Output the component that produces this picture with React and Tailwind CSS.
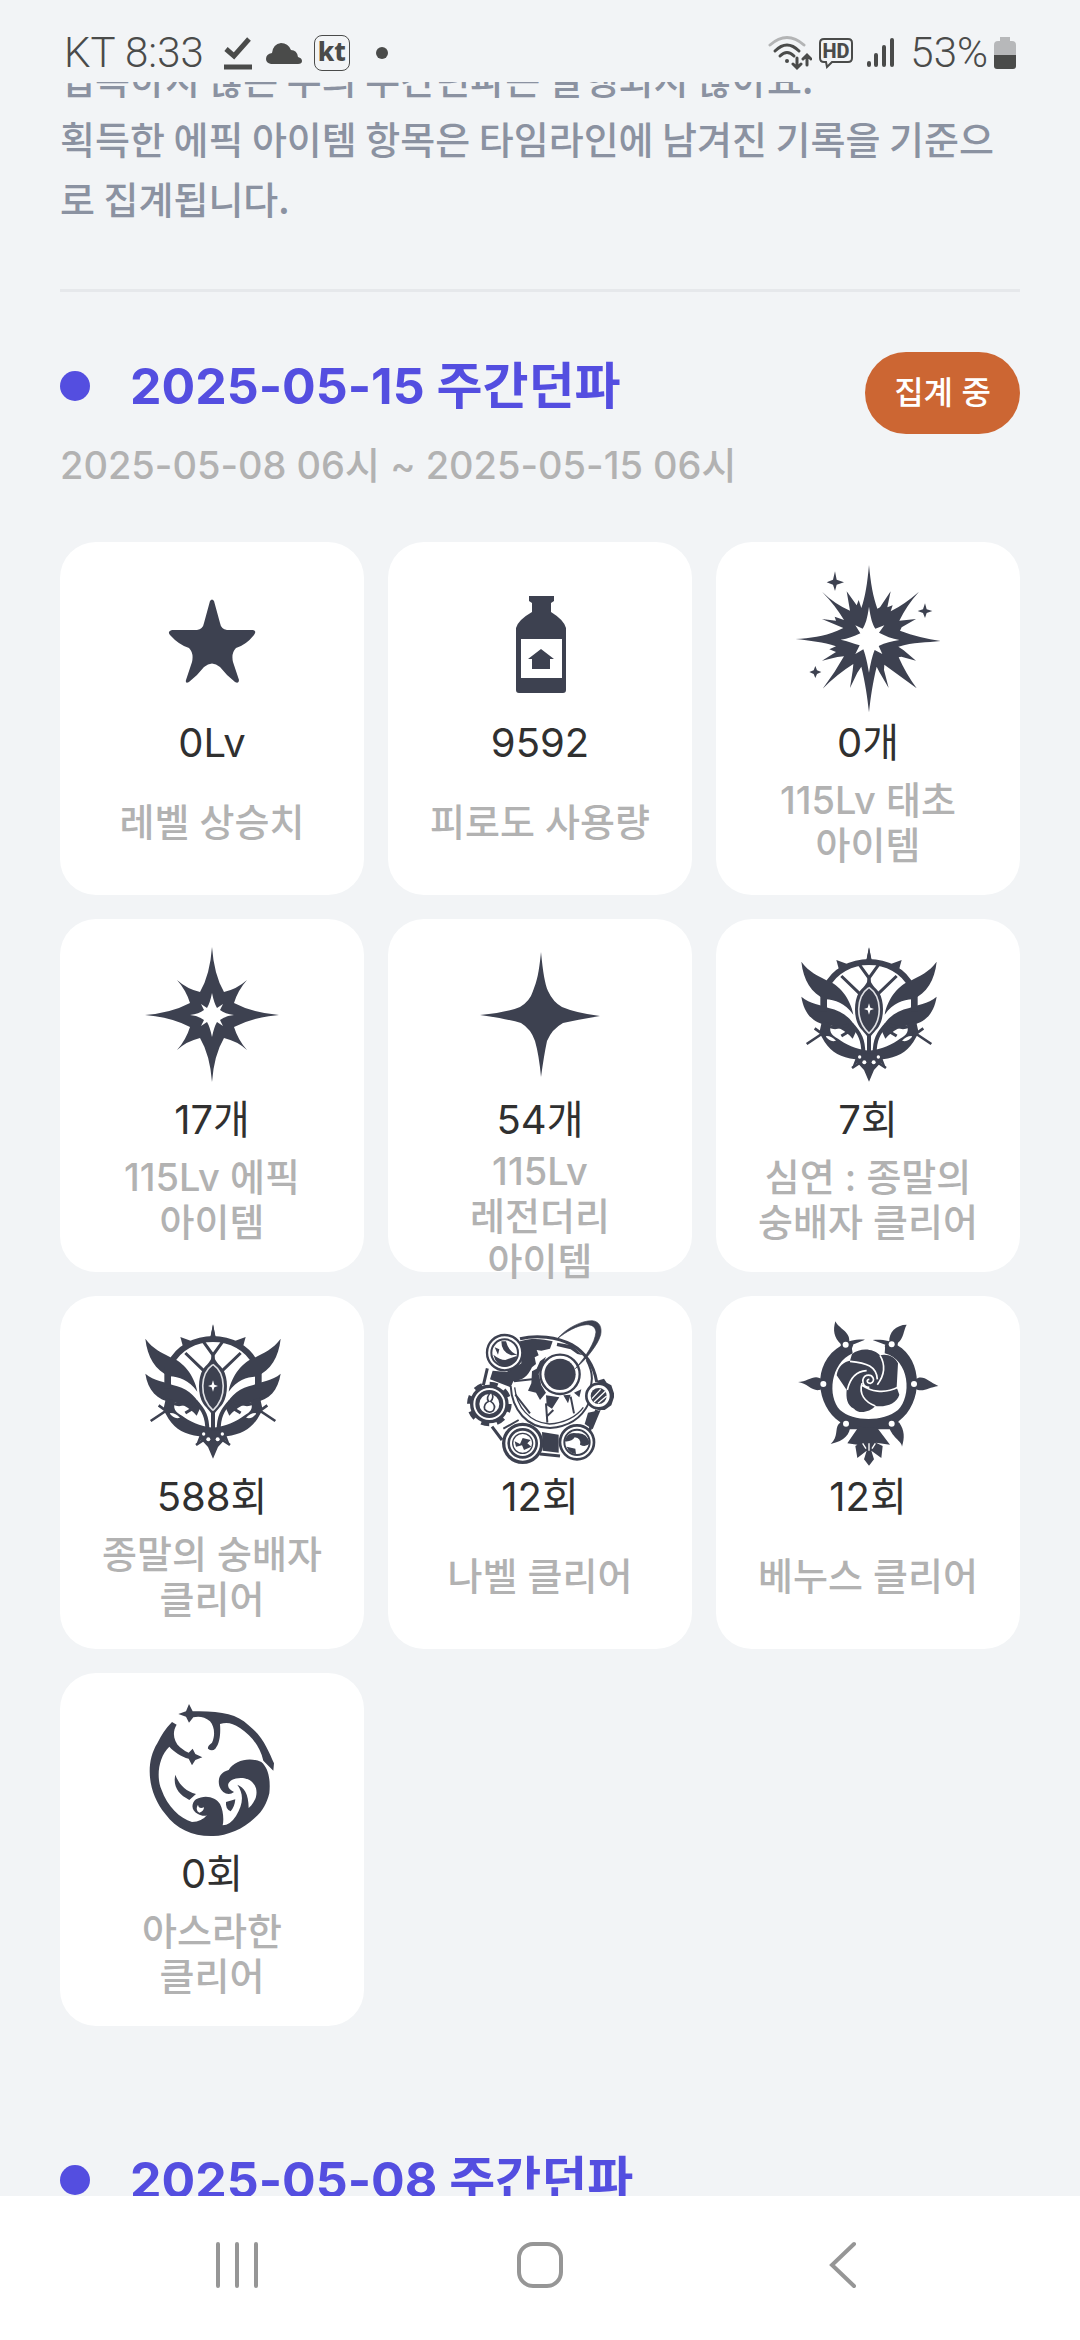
const INK = '#3d4150'

/* ── Stat icons ── */
function StarIcon() {
  return (
    <svg viewBox="0 0 148 148" className="size-[148px] shrink-0" fill={INK} aria-hidden="true">
      <path d="M72 35Q74 32 76 35L82 57Q83 63 89 64L115 64Q119 65 116 69Q108 79 98 82Q93 87 95 96L101 114Q101 118 97 116Q89 110 82 101Q74 94 66 101Q59 110 51 116Q47 118 48 114L54 96Q56 87 51 82Q41 79 32 69Q29 65 34 64L59 64Q65 63 66 57Z" />
    </svg>
  )
}

function BottleIcon() {
  return (
    <svg viewBox="0 0 148 148" className="size-[148px] shrink-0" fill={INK} aria-hidden="true">
      <path d="M63 30H88V35L85 37V46Q98 54 100 62V124Q100 127 97 127H53Q50 127 50 124V62Q52 54 66 46V37L63 35Z" />
      <path d="M55 73H96V112H55Z" fill="#fff" />
      <path d="M75 83L88 93H84V103H66V93H62Z" />
    </svg>
  )
}

function PrimevalIcon() {
  return (
    <svg viewBox="282 78 444 444" className="size-[148px] shrink-0 overflow-visible" fill={INK} aria-hidden="true">
      <path d="M507 75C512 130 519 170 532 206L540 202L572 154L562 202L578 196L572 214Q615 192 657 155Q620 196 598 242L648 237L605 262L600 272C640 288 680 296 722 303C680 308 640 306 595 320L610 330L648 362L604 350L596 352Q618 402 650 445Q600 408 553 374L552 390L566 444L538 396L530 380C518 430 512 470 507 517C502 470 496 430 484 380L472 398L450 444L458 392L460 372Q412 402 368 446Q405 398 432 349L412 351L366 362L408 336L388 328L408 319C370 306 330 302 287 297C330 294 370 290 412 272L430 264L366 237L408 242L404 230L432 240Q406 196 366 155Q404 192 450 212L440 154L470 196L476 180L484 204C496 170 502 130 507 75Z" />
      <path d="M507 200C512 235 517 252 526 266L553 256L537 278C556 288 576 296 598 300C576 304 556 308 536 318L547 342L524 330C516 350 512 370 507 398C502 370 498 350 490 328L466 342L479 316C460 310 445 304 422 299C445 296 460 290 481 280L466 256L488 266C497 252 502 235 507 200Z" fill="#fff" />
      <path d="M405 94L410 119L432 127L410 134L405 153L399 134L380 127L399 119Z" />
      <path d="M675 190L680 208L697 213L680 219L675 234L669 219L653 213L669 208Z" />
      <path d="M346 378L351 391L364 396L351 402L346 414L341 402L328 396L341 391Z" />
    </svg>
  )
}

function EpicIcon() {
  return (
    <svg viewBox="0 0 148 148" className="size-[148px] shrink-0" fill={INK} aria-hidden="true">
      <path d="M74 4Q76 32 86 49Q99 46 109 37Q100 47 96 60Q115 70 141 72Q115 74 96 84Q100 97 109 107Q99 98 86 95Q76 112 74 139Q72 112 62 95Q49 98 39 107Q48 97 52 84Q33 74 7 72Q33 70 52 60Q48 47 39 37Q49 46 62 49Q72 32 74 4Z" />
      <path d="M74 50Q76 60 79 65L85 61L82 67Q87 71 96 72Q87 73 82 77L85 83L79 79Q76 84 74 94Q72 84 69 79L63 83L66 77Q61 73 52 72Q61 71 66 67L63 61L69 65Q72 60 74 50Z" fill="#fff" />
    </svg>
  )
}

function LegendaryIcon() {
  return (
    <svg viewBox="0 0 148 148" className="size-[148px] shrink-0" fill={INK} aria-hidden="true">
      <path d="M75 9C77 30 79 41 82 48Q87 59 96 64Q110 70 134 73Q110 77 97 80Q86 86 81 98Q78 112 75 134Q73 112 69 98Q65 86 55 80Q42 76 14 72Q42 69 54 64Q64 58 67 48C71 38 73 30 75 9Z" />
    </svg>
  )
}

function WingHalf() {
  return (
    <>
      <path d="M297 52L305 92H289Z" />
      <path d="M199 90L232 102L210 130Z" />
      <path d="M170 170C192 122 245 96 298 96" fill="none" stroke={INK} strokeWidth="18" />
      <path d="M94 95C116 126 146 138 172 152C206 162 242 206 250 254C224 218 196 210 166 208C124 190 100 150 94 95Z" />
      <path d="M94 200C120 222 154 224 176 234C214 242 244 262 260 300L248 326C224 300 200 288 176 286C128 280 102 250 94 200Z" />
      <path d="M151 180H171V244H151Z" />
      <path d="M156 272L184 282C176 304 182 314 204 326C226 342 256 358 297 362V455L282 420L262 398L246 414L256 388C212 382 186 368 164 336L148 308Z" />
      <path d="M166 318Q184 316 198 332Q180 338 166 318Z" fill="#fff" />
      <path d="M110 342L164 306M134 295L168 320M246 414L270 398" fill="none" stroke={INK} strokeWidth="8" />
      <path d="M214 138L272 194M268 104L297 144L297 172" fill="none" stroke={INK} strokeWidth="9" />
      <path d="M236 286C206 292 194 296 180 290M244 300L214 318" fill="none" stroke={INK} strokeWidth="9" />
      <path d="M244 282C270 310 280 330 280 370M297 312V370" fill="none" stroke={INK} strokeWidth="12" />
      <path d="M297 138C292 165 278 172 266 188C252 212 250 262 268 290C280 306 292 314 297 330Z" />
      <path d="M297 172C258 200 254 270 297 310" fill="none" stroke="#dfe0e4" strokeWidth="5" />
      <circle cx="269" cy="381" r="5" fill="#fff" />
      <circle cx="283" cy="397" r="6" fill="#fff" />
    </>
  )
}

function AbyssIcon() {
  return (
    <svg viewBox="72 39 444 444" className="size-[148px] shrink-0" fill={INK} aria-hidden="true">
      <WingHalf />
      <g transform="translate(594 0) scale(-1 1)">
        <WingHalf />
      </g>
      <path d="M297 220L301 233L312 237L301 241L297 254L293 241L282 237L293 233Z" fill="#fff" />
    </svg>
  )
}

function NabelIcon() {
  return (
    <svg viewBox="78 60 444 444" className="size-[148px] shrink-0" fill="none" stroke={INK} aria-hidden="true">
      {/* hull */}
      <path d="M240 116C290 104 350 110 395 134C440 160 462 200 470 245M142 205L130 256M156 380L186 420M470 330L446 400M300 462L360 468" strokeWidth="9" />
      <path d="M240 124C280 112 310 118 338 124L330 146L304 152L290 150L296 166L284 172L288 192L276 202C262 230 250 240 220 244L212 262L150 238L158 212L200 216L244 190Z" fill={INK} stroke="none" />
      <path d="M352 128L395 136L428 166L412 162L392 148L350 138Z" fill={INK} stroke="none" />
      <path d="M444 338L482 330L458 388L434 372Z" fill={INK} stroke="none" />
      <path d="M306 396L356 404V458L308 452Z" fill={INK} stroke="none" />
      <path d="M212 258C216 330 262 384 330 384C384 380 424 356 446 310" strokeWidth="6" />
      <path d="M224 262C230 320 268 368 328 372C372 370 410 350 430 322" strokeWidth="4" />
      <path d="M222 244L276 238M226 284L270 340M320 350L340 330M318 310L322 368M392 290L402 340M190 386L236 360M200 400L256 372M440 180C456 210 462 240 448 270" strokeWidth="6" />
      {/* core */}
      <path d="M300 184L318 170L306 200L296 222L304 256L318 278L300 300L288 278L264 272L274 250L276 214L290 206Z" fill={INK} stroke="none" />
      <path d="M318 286L358 292L336 326L320 316ZM370 286L392 284L384 310ZM402 278L424 268L418 292Z" fill={INK} stroke="none" />
      <circle cx="360" cy="223" r="59" fill="#fff" strokeWidth="7" />
      <circle cx="360" cy="223" r="47" fill={INK} stroke="none" />
      {/* ring sweeping out of the core */}
      <path d="M352 116C380 84 424 62 456 62C480 64 486 84 482 104C474 134 440 176 406 206C440 166 464 130 468 96C466 80 456 74 440 74C410 76 378 96 352 116Z" fill={INK} strokeWidth="2" />
      {/* upper left lens */}
      <circle cx="194" cy="158" r="53" fill="#fff" strokeWidth="7" />
      <circle cx="194" cy="158" r="40" strokeWidth="6" />
      <path d="M160 164Q180 180 196 180L230 168Q224 196 196 200Q168 196 160 164ZM184 124Q184 156 214 166L232 164Q206 156 198 124ZM164 142L178 148L174 164Z" fill={INK} stroke="none" />
      {/* left gear */}
      <circle cx="148" cy="312" r="60" strokeWidth="14" strokeDasharray="24 23" />
      <circle cx="148" cy="312" r="53" fill="#fff" strokeWidth="10" />
      <circle cx="148" cy="312" r="36" strokeWidth="12" />
      <path d="M154 276Q164 292 152 304Q170 316 160 332Q146 342 134 328Q130 312 146 304Q136 292 154 276Z" fill="#fff" strokeWidth="5" />
      {/* bottom gear */}
      <circle cx="248" cy="430" r="57" fill="#fff" strokeWidth="10" />
      <circle cx="248" cy="430" r="42" strokeWidth="8" />
      <circle cx="248" cy="430" r="30" strokeWidth="4" />
      <path d="M224 424L240 432L248 414L272 420L262 430L274 440L252 450L246 436L228 440Z" fill={INK} stroke="none" />
      {/* bottom right lens */}
      <circle cx="411" cy="427" r="51" fill="#fff" strokeWidth="8" />
      <circle cx="411" cy="427" r="38" strokeWidth="6" />
      <path d="M374 424Q382 394 410 400Q440 396 450 430Q436 444 420 434Q424 414 404 412Q396 426 374 424ZM380 440L406 446L408 462Q388 460 380 440Z" fill={INK} stroke="none" />
      {/* right gear */}
      <path d="M466 244L492 236L500 248L514 256L524 286L514 316L494 330L470 330L494 318L508 290L494 258Z" fill={INK} stroke="none" />
      <circle cx="476" cy="288" r="37" fill="#fff" strokeWidth="8" />
      <circle cx="476" cy="288" r="24" fill={INK} stroke="none" />
      <path d="M456 296L482 268M462 306L496 274M474 310L500 288" stroke="#fff" strokeWidth="4" />
    </svg>
  )
}

function VenusIcon() {
  return (
    <svg viewBox="72 60 444 444" className="size-[148px] shrink-0" fill={INK} aria-hidden="true">
      <path d="M285 119C255 118 235 122 215 136C120 190 140 320 210 366L222 388H375L386 364C460 310 460 180 382 136C360 122 340 118 308 120L346 134L344 160C420 180 426 290 384 330C340 366 250 366 210 330C172 290 180 190 248 160L244 136Z" />
      {/* thorn leaves */}
      <path d="M196 64C206 86 240 94 238 124L250 134L240 160L214 154L212 132C192 112 188 92 196 64Z" />
      <path d="M410 74C378 74 356 98 358 124L344 138L352 160L380 150L384 128C402 114 400 92 410 74Z" />
      <path d="M84 246C112 246 128 226 148 234L172 244V262L148 270C126 274 112 250 84 246Z" />
      <path d="M505 258C478 246 464 228 444 234L424 244V262L444 270C466 274 478 262 505 258Z" />
      <path d="M182 432C206 410 194 388 206 372L226 356L242 376C238 404 226 422 182 432Z" />
      <path d="M396 440C396 424 362 410 356 376L368 358L388 368C404 392 404 412 396 440Z" />
      <g fill="#fff">
        <circle cx="227" cy="134" r="9" />
        <circle cx="365" cy="133" r="9" />
        <circle cx="160" cy="252" r="9" />
        <circle cx="432" cy="252" r="9" />
        <circle cx="228" cy="371" r="9" />
        <circle cx="365" cy="371" r="9" />
      </g>
      {/* stem */}
      <path d="M266 380L232 430L262 434L284 424L266 432L256 438L262 474L290 452L282 478L297 497L312 478L304 452L334 474L338 438L318 428L360 434L322 384Z" />
      <path d="M297 430V452M278 430L288 446M316 430L306 446" stroke="#fff" strokeWidth="4" />
      {/* rose */}
      <path d="M246 162C270 142 310 144 330 166C350 160 376 170 384 190L380 262L388 284C380 310 350 322 316 318C300 336 266 344 252 326C230 316 228 292 230 270L200 226C204 198 224 184 240 182Z" />
      <path d="M240 184C290 188 320 200 322 238M330 166C350 200 340 230 322 254M384 262C340 284 300 272 276 256M316 318C284 306 266 282 276 250M232 270C240 234 258 214 290 212M298 262C276 262 272 234 290 226C310 222 318 244 302 250C290 250 288 238 298 238" fill="none" stroke="#fff" strokeWidth="5" />
    </svg>
  )
}

function AzureIcon() {
  return (
    <svg viewBox="54 51 444 444" className="size-[148px] shrink-0" fill={INK} aria-hidden="true">
      <path d="M207 72L218 94C300 92 350 102 384 134C430 170 446 214 462 250L460 272L430 242C420 200 396 168 360 144C336 128 320 126 300 132C302 160 300 190 286 206Q276 216 264 206Q262 198 276 188C286 166 284 140 270 124C254 110 236 108 220 112L207 128L198 110L175 102L198 94Z" />
      <path d="M156 126L170 134C156 156 160 184 180 202Q194 214 206 218L218 206L226 222L247 232L226 240L216 256L206 236C184 230 162 216 148 200C116 230 108 290 124 328C142 380 180 416 216 426Q246 424 262 404C256 410 244 408 234 402C214 392 212 372 228 358C256 342 288 352 300 372C310 390 312 420 308 436Q330 436 348 408C370 372 372 342 352 314C372 322 386 340 386 384C408 366 416 336 404 316C388 288 350 290 332 302C318 314 324 328 342 336C328 348 306 342 298 318C292 294 302 276 326 270C344 240 390 230 424 246C446 264 452 300 448 340C440 370 430 392 404 414C372 446 320 468 280 468C220 470 170 448 136 402C84 340 74 250 112 190Q130 152 156 126Z" />
      <path d="M234 374Q236 388 252 382Q252 394 238 398Q224 390 234 374Z" fill="#fff" />
      <path d="M166 284C176 312 196 334 228 342L208 360C176 344 158 320 166 284Z" />
      <path d="M318 366L346 358Q344 380 332 394Q316 388 318 366Z" />
    </svg>
  )
}

/* ── Status bar icons ── */
function WifiIcon() {
  return (
    <svg viewBox="0 0 44 36" className="h-9 w-11" fill="none" stroke="#4a4b4a" strokeWidth="3" strokeLinecap="round" aria-hidden="true">
      <path d="M2 10Q19 -5 36 10" stroke="#b3b4b5" />
      <path d="M7 16Q19 4 31 16M12 21Q19 14 26 21" />
      <circle cx="19" cy="26" r="2" fill="#4a4b4a" stroke="none" />
      <path d="M29 23V32M25 29L29 33L33 29M39 30V21M35 24L39 20L43 24" strokeWidth="3" />
    </svg>
  )
}

function HdIcon() {
  return (
    <svg viewBox="0 0 36 32" className="h-8 w-9" aria-hidden="true">
      <path d="M6 2H30Q34 2 34 6V21Q34 25 30 25H14L9 30L8 25H6Q2 25 2 21V6Q2 2 6 2Z" fill="none" stroke="#4a4b4a" strokeWidth="2" />
      <text x="18" y="21" textAnchor="middle" fontSize="20" fontWeight="800" fontFamily="Roboto, sans-serif" fill="#4a4b4a">HD</text>
    </svg>
  )
}

function SignalIcon() {
  return (
    <svg viewBox="0 0 28 32" className="h-8 w-7" stroke="#4a4b4a" strokeWidth="4" strokeLinecap="round" aria-hidden="true">
      <path d="M3 28V26M10 28V18M18 28V10M26 28V3" />
    </svg>
  )
}

function BatteryIcon() {
  return (
    <svg viewBox="0 0 22 34" className="h-[34px] w-[22px]" aria-hidden="true">
      <path d="M6 1H16V5H18Q22 5 22 9V19H0V9Q0 5 4 5H6Z" fill="#b7b8ba" />
      <path d="M0 19H22V30Q22 33 19 33H3Q0 33 0 30Z" fill="#4a4b4a" />
    </svg>
  )
}

const STATS = [
  { icon: StarIcon,      value: '0Lv',   label: '레벨 상승치' },
  { icon: BottleIcon,    value: '9592',  label: '피로도 사용량' },
  { icon: PrimevalIcon,  value: '0개',   label: '115Lv 태초 아이템' },
  { icon: EpicIcon,      value: '17개',  label: '115Lv 에픽 아이템' },
  { icon: LegendaryIcon, value: '54개',  label: '115Lv 레전더리 아이템' },
  { icon: AbyssIcon,     value: '7회',   label: '심연 : 종말의 숭배자 클리어' },
  { icon: AbyssIcon,     value: '588회', label: '종말의 숭배자 클리어' },
  { icon: NabelIcon,     value: '12회',  label: '나벨 클리어' },
  { icon: VenusIcon,     value: '12회',  label: '베누스 클리어' },
  { icon: AzureIcon,     value: '0회',   label: '아스라한 클리어' },
]

function StatusBar() {
  return (
    <header className="flex h-[82px] shrink-0 items-center justify-between px-16 pt-6 text-[#4a4b4a]">
      <div className="flex items-center">
        <span className="font-['Roboto',sans-serif] text-[42px] font-light leading-none">KT 8:33</span>
        <svg viewBox="0 0 28 34" className="ml-5 h-[34px] w-7" fill="none" stroke="currentColor" strokeWidth="5" aria-hidden="true">
          <path d="M2 13L10 20L25 3M0 31H28" />
        </svg>
        <svg viewBox="0 0 36 21" className="ml-3.5 h-[21px] w-9" fill="currentColor" aria-hidden="true">
          <path d="M5 21Q0 20 0 16Q0 11 6 10Q7 1 15 0Q22 0 25 7Q31 7 32 14Q36 15 36 18Q36 21 32 21Z" />
        </svg>
        <span className="ml-3 flex size-9 items-center justify-center rounded-lg border border-[#4a4b4a] pb-1 font-['Noto_Sans',sans-serif] text-[26px] font-extrabold leading-none">
          kt
        </span>
        <span className="ml-[26px] size-3 rounded-full bg-[#4a4b4a]" />
      </div>
      <div className="flex items-center">
        <WifiIcon />
        <span className="ml-1.5 flex"><HdIcon /></span>
        <span className="ml-3 flex"><SignalIcon /></span>
        <span className="ml-4 font-['Roboto',sans-serif] text-[42px] font-light leading-none">53%</span>
        <span className="ml-1.5 flex"><BatteryIcon /></span>
      </div>
    </header>
  )
}

function WeekTitle({ date }) {
  return (
    <div className="flex items-center gap-10">
      <span className="size-[30px] rounded-full bg-[#544ee0]" />
      <h2 className="text-[50px] font-bold leading-[68px] text-[#544ee0]">{date} 주간던파</h2>
    </div>
  )
}

function StatCard({ icon: Icon, value, label }) {
  return (
    <li className="flex h-[353px] flex-col items-center rounded-[36px] bg-white px-9 pt-6">
      <Icon />
      <p className="text-[40px] leading-[58px] text-[#303030]">{value}</p>
      <div className="flex min-h-[101px] shrink-0 items-center text-center text-[38px] font-medium leading-[45px] text-[#b2b2b2] break-keep">
        {label}
      </div>
    </li>
  )
}

export default function App() {
  return (
    <div className="flex h-screen flex-col bg-[#f2f4f6] font-['Inter','Noto_Sans_CJK_KR',sans-serif]">
      <StatusBar />

      <main className="min-h-0 flex-1 overflow-hidden px-[60px]">
        {/* ── Notice, scrolled partly under the status bar ── */}
        <p className="-mt-[34px] font-['Noto_Sans_CJK_KR',sans-serif] text-[38px] font-medium leading-[60px] text-[#8b92a1]">
          접속하지 않은 주의 주간던파는 발행되지 않아요.
          <br />
          획득한 에픽 아이템 항목은 타임라인에 남겨진 기록을 기준으로 집계됩니다.
        </p>
        <hr className="mt-[61px] border-t-[3px] border-[#e6e8eb]" />

        {/* ── Current week ── */}
        <section className="pt-[60px]">
          <div className="flex items-start justify-between">
            <div>
              <WeekTitle date="2025-05-15" />
              <p className="mt-4 text-[38px] font-medium leading-[58px] text-[#b2b2b2]">
                2025-05-08 06시 ~ 2025-05-15 06시
              </p>
            </div>
            <span className="rounded-full bg-[#cc6633] px-[29px] text-[32px] font-medium leading-[82px] text-white">
              집계 중
            </span>
          </div>
          <ul className="mt-12 grid grid-cols-3 gap-6">
            {STATS.map((s) => (
              <StatCard key={s.label} {...s} />
            ))}
          </ul>
        </section>

        {/* ── Previous week ── */}
        <section className="pt-[120px]">
          <WeekTitle date="2025-05-08" />
        </section>
      </main>

      <nav className="grid h-36 shrink-0 grid-cols-3 bg-white px-[86px] pb-1.5 text-[#969696]">
        <button aria-label="최근 앱" className="flex items-center justify-center">
          <svg viewBox="0 0 48 48" className="size-12" stroke="currentColor" strokeWidth="4" strokeLinecap="round">
            <path d="M5 3V45M24 3V45M43 3V45" />
          </svg>
        </button>
        <button aria-label="홈" className="flex items-center justify-center">
          <svg viewBox="0 0 48 48" className="size-12" fill="none" stroke="currentColor" strokeWidth="4">
            <rect x="3" y="3" width="42" height="42" rx="14" />
          </svg>
        </button>
        <button aria-label="뒤로" className="flex items-center justify-center">
          <svg viewBox="0 0 48 48" className="size-12" fill="none" stroke="currentColor" strokeWidth="4" strokeLinecap="round">
            <path d="M35 3L13 24L35 45" />
          </svg>
        </button>
      </nav>
    </div>
  )
}
